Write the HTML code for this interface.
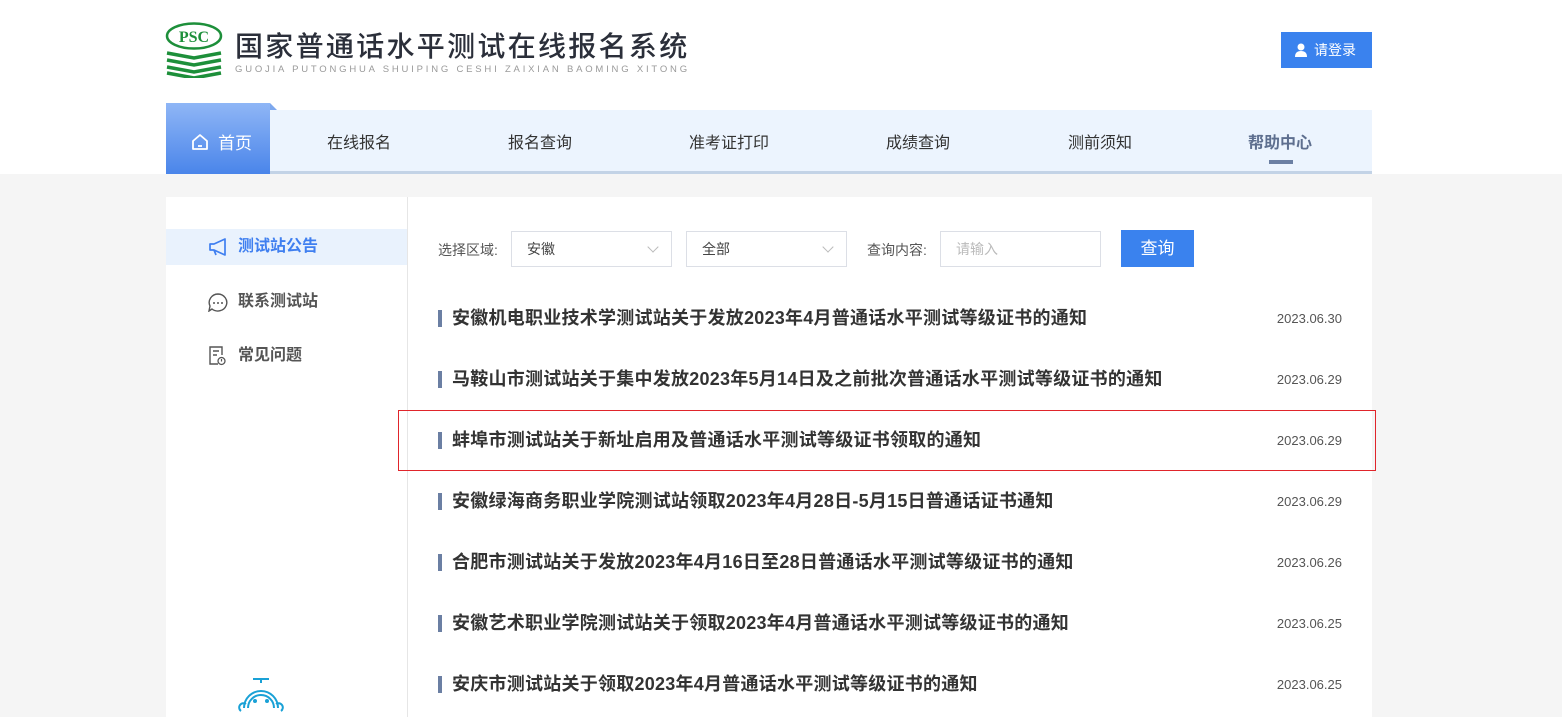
<!DOCTYPE html>
<html><head><meta charset="utf-8"><style>
*{margin:0;padding:0;box-sizing:border-box}
body{width:1562px;height:708px;overflow:hidden;background:#f5f5f5;font-family:"Liberation Sans","Noto Sans CJK SC",sans-serif;position:relative}
.top{position:absolute;left:0;top:0;width:1562px;height:174px;background:#fff}
.abs{position:absolute}
.nav{left:166px;top:110px;width:1206px;height:64px;background:#ecf4fe;border-bottom:3px solid #c3d3e6}
.nav span{position:absolute;top:19px;font-size:16px;color:#333;transform:translateX(-50%);white-space:nowrap}
.home{left:166px;top:103px;width:104px;height:71px;background:linear-gradient(#8fb6f6,#4a85ea);color:#fff;font-size:17px}
.panel{left:166px;top:197px;width:1206px;height:520px;background:#fff}
.side{left:166px;top:197px;width:242px;height:520px;border-right:1px solid #e6e6e6}
.si{position:absolute;left:0;width:241px;height:36px;font-size:16px;font-weight:bold;color:#555;line-height:36px;padding-left:72px}
.row{position:absolute;left:438px;width:904px;height:24px}
.row b{position:absolute;left:0;top:3px;width:4px;height:17px;background:#6b7fa3}
.row i{position:absolute;left:14px;top:-3px;font-style:normal;font-weight:bold;font-size:18px;letter-spacing:0.25px;color:#333;white-space:nowrap}
.row em{position:absolute;right:0;top:4px;font-style:normal;font-size:13px;color:#555}
.sel{top:231px;height:36px;border:1px solid #dcdfe6;background:#fff;font-size:14px;color:#444;line-height:34px;padding-left:15px}
.arr:after{content:"";position:absolute;right:14px;top:11px;width:7px;height:7px;border-right:1px solid #bbb;border-bottom:1px solid #bbb;transform:rotate(45deg)}
</style></head><body>
<div class="top"></div>
<svg class="abs" style="left:165px;top:22px" width="58" height="56" viewBox="0 0 58 56">
<ellipse cx="29" cy="14" rx="27" ry="12.5" fill="none" stroke="#1d8f3a" stroke-width="2.5"/>
<text x="29" y="20" text-anchor="middle" font-family="Liberation Serif" font-weight="bold" font-size="16" fill="#1d8f3a">PSC</text>
<path d="M2 31 L29 36 L56 31 M2 38 L29 43 L56 38 M2 45 L29 50 L56 45 M2 51 L29 56 L56 51" stroke="#1d8f3a" stroke-width="3.5" fill="none"/>
</svg>
<div class="abs" style="left:235px;top:25px;font-size:28px;font-weight:500;color:#2b2f3a;letter-spacing:2.3px;white-space:nowrap;font-family:'Noto Sans CJK SC',sans-serif">国家普通话水平测试在线报名系统</div>
<div class="abs" style="left:235px;top:64px;font-size:9.5px;color:#9a9a9a;letter-spacing:2.8px;white-space:nowrap">GUOJIA PUTONGHUA SHUIPING CESHI ZAIXIAN BAOMING XITONG</div>
<div class="abs" style="left:1281px;top:32px;width:91px;height:36px;background:#3a82ee;color:#fff;font-size:14px;line-height:36px;padding-left:33px">请登录
<svg class="abs" style="left:14px;top:11px" width="12" height="14" viewBox="0 0 12 14"><circle cx="6" cy="4" r="3.5" fill="#fff"/><path d="M0 14 Q0 8 6 8 Q12 8 12 14Z" fill="#fff"/></svg></div>
<div class="abs nav">
<span style="left:193px">在线报名</span><span style="left:374px">报名查询</span><span style="left:563px">准考证打印</span><span style="left:752px">成绩查询</span><span style="left:934px">测前须知</span><span style="left:1114px;font-weight:bold;color:#5e6f8f">帮助中心</span>
<div class="abs" style="left:1103px;top:50px;width:24px;height:4px;background:#6b7fa3"></div>
</div>
<div class="abs home"><svg class="abs" style="left:25px;top:30px" width="18" height="18" viewBox="0 0 18 18"><path d="M2 8 L9 2 L16 8 V16 H2Z" fill="none" stroke="#fff" stroke-width="1.8" stroke-linejoin="round"/><path d="M7 13 H11" stroke="#fff" stroke-width="1.8"/></svg><span class="abs" style="left:52px;top:26px">首页</span>
<div class="abs" style="right:-7px;top:0;width:0;height:0;border-left:7px solid #7da8ee;border-top:7px solid transparent"></div></div>
<div class="abs panel"></div>
<div class="abs side">
<div class="si" style="top:32px;background:#e9f2fd;color:#3f7ff0">测试站公告
<svg class="abs" style="left:42px;top:9px" width="20" height="18" viewBox="0 0 20 18"><path d="M2 6 H6 L17 1 V17 L6 12 H2Z M6 12 L8 17" fill="none" stroke="#3f7ff0" stroke-width="1.7" stroke-linejoin="round"/></svg></div>
<div class="si" style="top:87px">联系测试站
<svg class="abs" style="left:42px;top:9px" width="20" height="19" viewBox="0 0 20 19"><path d="M10 1 A9 8.5 0 1 1 4 16 L1 18 L2 13 A9 8.5 0 0 1 10 1Z" fill="none" stroke="#555" stroke-width="1.4"/><circle cx="6" cy="10" r="1" fill="#555"/><circle cx="10" cy="10" r="1" fill="#555"/><circle cx="14" cy="10" r="1" fill="#555"/></svg></div>
<div class="si" style="top:141px">常见问题
<svg class="abs" style="left:43px;top:8px" width="17" height="20" viewBox="0 0 17 20"><path d="M9 18 H1 V1 H13 V9 M4 5 H10 M4 9 H8" fill="none" stroke="#555" stroke-width="1.4"/><circle cx="12.5" cy="15" r="3.5" fill="none" stroke="#555" stroke-width="1.3"/><path d="M12.5 13 V15.5" stroke="#555" stroke-width="1.2"/></svg></div>
<svg class="abs" style="left:70px;top:478px" width="55" height="40" viewBox="0 0 55 40"><path d="M17 4 H33" stroke="#1aa1d6" stroke-width="2"/><path d="M25 4 V8" stroke="#1aa1d6" stroke-width="2"/><path d="M8 33 A17 17 0 0 1 42 33 M12 33 A13 13 0 0 1 38 33" fill="none" stroke="#1aa1d6" stroke-width="2"/><path d="M5 36 A4 4 0 0 1 10 29 M45 36 A4 4 0 0 0 40 29" fill="none" stroke="#1aa1d6" stroke-width="2"/><circle cx="19" cy="26" r="2" fill="#1aa1d6"/><circle cx="31" cy="26" r="2" fill="#1aa1d6"/></svg>
</div>
<div class="abs" style="left:438px;top:240px;font-size:14px;color:#555">选择区域:</div>
<div class="abs sel arr" style="left:511px;width:161px">安徽</div>
<div class="abs sel arr" style="left:686px;width:161px">全部</div>
<div class="abs" style="left:867px;top:240px;font-size:14px;color:#555">查询内容:</div>
<div class="abs sel" style="left:940px;width:161px;color:#bbb">请输入</div>
<div class="abs" style="left:1121px;top:230px;width:73px;height:37px;background:#3a82ee;color:#fff;font-size:17px;line-height:37px;text-align:center">查询</div>
<div class="row" style="top:307px"><b></b><i>安徽机电职业技术学测试站关于发放2023年4月普通话水平测试等级证书的通知</i><em>2023.06.30</em></div>
<div class="row" style="top:368px"><b></b><i>马鞍山市测试站关于集中发放2023年5月14日及之前批次普通话水平测试等级证书的通知</i><em>2023.06.29</em></div>
<div class="row" style="top:429px"><b></b><i>蚌埠市测试站关于新址启用及普通话水平测试等级证书领取的通知</i><em>2023.06.29</em></div>
<div class="row" style="top:490px"><b></b><i>安徽绿海商务职业学院测试站领取2023年4月28日-5月15日普通话证书通知</i><em>2023.06.29</em></div>
<div class="row" style="top:551px"><b></b><i>合肥市测试站关于发放2023年4月16日至28日普通话水平测试等级证书的通知</i><em>2023.06.26</em></div>
<div class="row" style="top:612px"><b></b><i>安徽艺术职业学院测试站关于领取2023年4月普通话水平测试等级证书的通知</i><em>2023.06.25</em></div>
<div class="row" style="top:673px"><b></b><i>安庆市测试站关于领取2023年4月普通话水平测试等级证书的通知</i><em>2023.06.25</em></div>
<div class="abs" style="left:398px;top:410px;width:978px;height:61px;border:1.5px solid #e0252b"></div>
</body></html>
